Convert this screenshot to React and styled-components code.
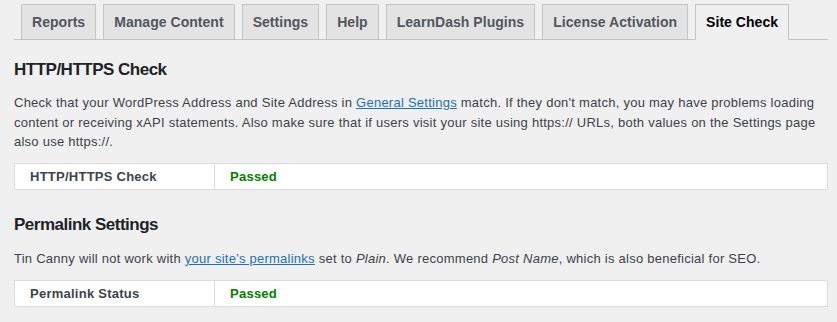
import React from "react";
import styled, { createGlobalStyle } from "styled-components";

const Global = createGlobalStyle`
  html, body { margin: 0; padding: 0; background: #f0f0f1; }
  body { font-family: "Liberation Sans", Arial, sans-serif; color: #3c434a; }
`;

const Page = styled.div`
  padding: 4px 9px 0 14px;
`;

const TabBar = styled.nav`
  display: flex;
  gap: 7px;
  padding-left: 7px;
  border-bottom: 1px solid #c3c4c7;
`;

const Tab = styled.a`
  display: block;
  padding: 5px 10px;
  font-size: 14px;
  line-height: 24px;
  font-weight: 700;
  letter-spacing: 0.04px;
  border: 1px solid #c3c4c7;
  margin-bottom: -1px;
  background: ${(p) => (p.$active ? "#f0f0f1" : "#e3e3e4")};
  border-bottom-color: ${(p) => (p.$active ? "#f0f0f1" : "#c3c4c7")};
  color: ${(p) => (p.$active ? "#000" : "#50575e")};
  text-decoration: none;
  white-space: nowrap;
`;

const Heading = styled.h2`
  margin: ${(p) => p.$top}px 0 0;
  font-size: 17px;
  letter-spacing: -0.5px;
  line-height: 24px;
  font-weight: 700;
  color: #1d2327;
`;

const Text = styled.p`
  margin: ${(p) => p.$top}px 0 0;
  font-size: 13px;
  letter-spacing: 0.25px;
  line-height: 19.5px;
  color: #3c434a;

  a { color: #2271b1; text-decoration: underline; }
  em { font-style: italic; }
`;

const Table = styled.div`
  margin-top: ${(p) => p.$top}px;
  display: grid;
  grid-template-columns: 199px 1fr;
  background: #fff;
  border: 1px solid #dcdcde;
`;

const HeadCell = styled.div`
  padding: 3px 15px;
  font-size: 13px;
  letter-spacing: 0.25px;
  line-height: 19px;
  font-weight: 700;
  color: #3c434a;
`;

const StatusCell = styled.div`
  padding: 3px 15px;
  font-size: 13px;
  letter-spacing: 0.25px;
  line-height: 19px;
  font-weight: 700;
  color: #008000;
  border-left: 1px solid #dcdcde;
`;

const tabs = [
  "Reports",
  "Manage Content",
  "Settings",
  "Help",
  "LearnDash Plugins",
  "License Activation",
  "Site Check",
];

export default function App() {
  return (
    <>
      <Global />
      <Page>
        <TabBar>
          {tabs.map((t) => (
            <Tab key={t} href="#" $active={t === "Site Check"}>
              {t}
            </Tab>
          ))}
        </TabBar>

        <Heading $top={18}>HTTP/HTTPS Check</Heading>
        <Text $top={11}>
          Check that your WordPress Address and Site Address in{" "}
          <a href="#">General Settings</a> match. If they don't match, you may
          have problems loading content or receiving xAPI statements. Also make
          sure that if users visit your site using https:// URLs, both values
          on the Settings page also use https://.
        </Text>
        <Table $top={11}>
          <HeadCell>HTTP/HTTPS Check</HeadCell>
          <StatusCell>Passed</StatusCell>
        </Table>

        <Heading $top={23}>Permalink Settings</Heading>
        <Text $top={12}>
          Tin Canny will not work with <a href="#">your site's permalinks</a>{" "}
          set to <em>Plain</em>. We recommend <em>Post Name</em>, which is also
          beneficial for SEO.
        </Text>
        <Table $top={12}>
          <HeadCell>Permalink Status</HeadCell>
          <StatusCell>Passed</StatusCell>
        </Table>
      </Page>
    </>
  );
}
